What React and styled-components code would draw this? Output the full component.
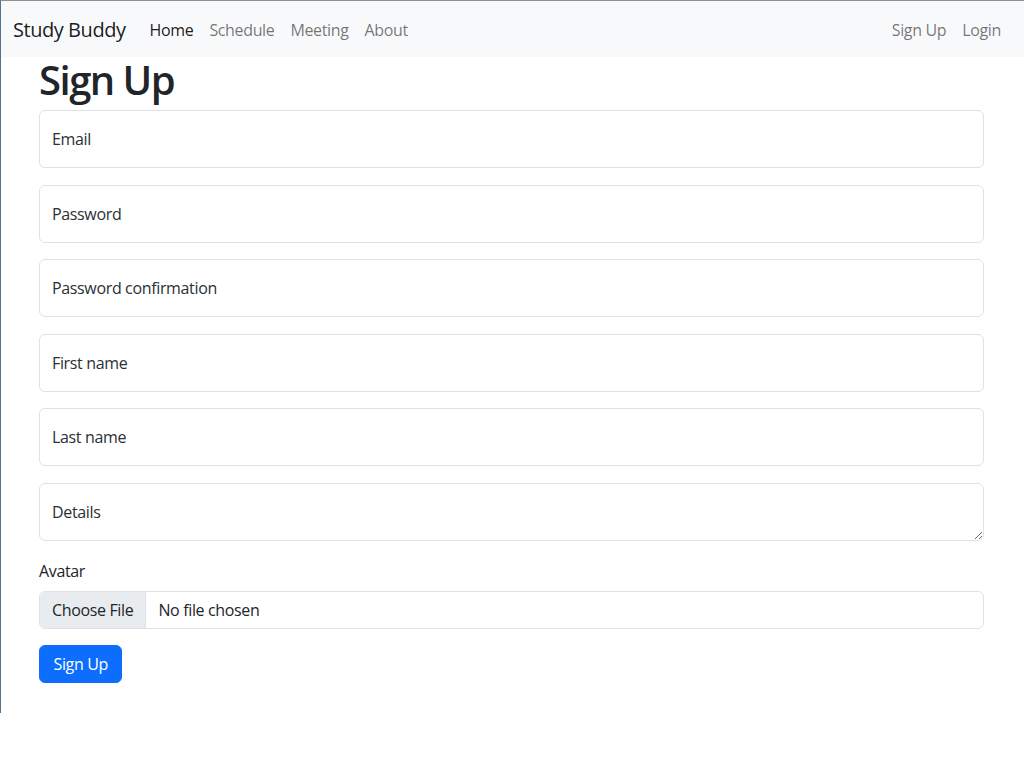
import React from "react";
import styled, { createGlobalStyle } from "styled-components";

const GlobalStyle = createGlobalStyle`
  html, body { margin: 0; padding: 0; background: #fff; }
  body {
    font-family: "Open Sans", "Noto Sans", sans-serif;
    font-size: 16px;
    line-height: 1.5;
    color: #212529;
  }
  *, *::before, *::after { box-sizing: border-box; }
`;

const Frame = styled.div`
  height: 713px;
  border-top: 1px solid #8d9196;
  border-left: 1px solid #56708f;
`;

const Navbar = styled.nav`
  height: 56px;
  background: #f8f9fa;
  display: flex;
  align-items: center;
  padding: 2px 12px 0;
`;

const Brand = styled.a`
  font-size: 20px;
  color: rgba(0, 0, 0, 0.9);
  margin-right: 16px;
  text-decoration: none;
  letter-spacing: -0.45px;
`;

const NavList = styled.div`
  display: flex;
  align-items: center;
  margin-left: ${(p) => (p.$end ? "auto" : "0")};
  margin-right: ${(p) => (p.$end ? "3px" : "0")};
`;

const NavLink = styled.a`
  padding: 8px 8px;
  font-size: 16px;
  letter-spacing: -0.35px;
  text-decoration: none;
  color: ${(p) => (p.$active ? "rgba(0,0,0,0.9)" : "rgba(0,0,0,0.55)")};
`;

const Container = styled.main`
  padding: 0 40px 0 38px;
`;

const Title = styled.h1`
  margin: 0 0 7px;
  font-size: 40px;
  font-weight: 600;
  line-height: 46px;
  letter-spacing: -1.5px;
  color: #212529;
`;

const Form = styled.form`
  display: flex;
  flex-direction: column;
`;

const fieldStyles = `
  display: block;
  width: 100%;
  height: 58px;
  margin: 0 0 16.6px;
  padding: 16px 12px;
  font-family: "Open Sans", "Noto Sans", sans-serif;
  font-size: 16px;
  line-height: 1.5;
  letter-spacing: -0.35px;
  color: #212529;
  background: #fff;
  border: 1px solid #dee2e6;
  border-radius: 6px;
  outline: none;
  &::placeholder { color: #2b3035; opacity: 1; }
`;

const TextInput = styled.input`
  ${fieldStyles}
`;

const TextArea = styled.textarea`
  ${fieldStyles}
  resize: vertical;
  min-height: 58px;
  margin-bottom: 18px;
`;

const Label = styled.label`
  display: block;
  margin-bottom: 8px;
  font-size: 16px;
  letter-spacing: -0.35px;
  color: #212529;
`;

const FileInput = styled.input`
  display: block;
  width: 100%;
  height: 38px;
  padding: 6px 12px;
  font-family: "Open Sans", "Noto Sans", sans-serif;
  font-size: 16px;
  line-height: 1.5;
  letter-spacing: -0.35px;
  color: #212529;
  background: #fff;
  border: 1px solid #dee2e6;
  border-radius: 6px;
  overflow: hidden;
  margin-bottom: 16px;
  &::file-selector-button {
    height: 38px;
    padding: 6px 12px;
    margin: -7px 12px -7px -12px;
    font-family: inherit;
    font-size: 16px;
    letter-spacing: -0.35px;
    color: #212529;
    background: #e9ecef;
    border: 0;
    border-right: 1px solid #dee2e6;
    border-radius: 0;
  }
`;

const SubmitButton = styled.button`
  align-self: flex-start;
  height: 38px;
  padding: 6px 13.5px;
  font-family: "Open Sans", "Noto Sans", sans-serif;
  font-size: 16px;
  line-height: 1.5;
  letter-spacing: -0.35px;
  color: #fff;
  background: #0d6efd;
  border: 1px solid #0d6efd;
  border-radius: 6px;
`;

export default function App() {
  return (
    <>
      <GlobalStyle />
      <Frame>
        <Navbar>
          <Brand href="#">Study Buddy</Brand>
          <NavList>
            <NavLink $active href="#">Home</NavLink>
            <NavLink href="#">Schedule</NavLink>
            <NavLink href="#">Meeting</NavLink>
            <NavLink href="#">About</NavLink>
          </NavList>
          <NavList $end>
            <NavLink href="#">Sign Up</NavLink>
            <NavLink href="#">Login</NavLink>
          </NavList>
        </Navbar>
        <Container>
          <Title>Sign Up</Title>
          <Form onSubmit={(e) => e.preventDefault()}>
            <TextInput type="email" placeholder="Email" />
            <TextInput type="password" placeholder="Password" />
            <TextInput type="password" placeholder="Password confirmation" />
            <TextInput type="text" placeholder="First name" />
            <TextInput type="text" placeholder="Last name" />
            <TextArea placeholder="Details" />
            <Label htmlFor="avatar">Avatar</Label>
            <FileInput id="avatar" type="file" />
            <SubmitButton type="submit">Sign Up</SubmitButton>
          </Form>
        </Container>
      </Frame>
    </>
  );
}
